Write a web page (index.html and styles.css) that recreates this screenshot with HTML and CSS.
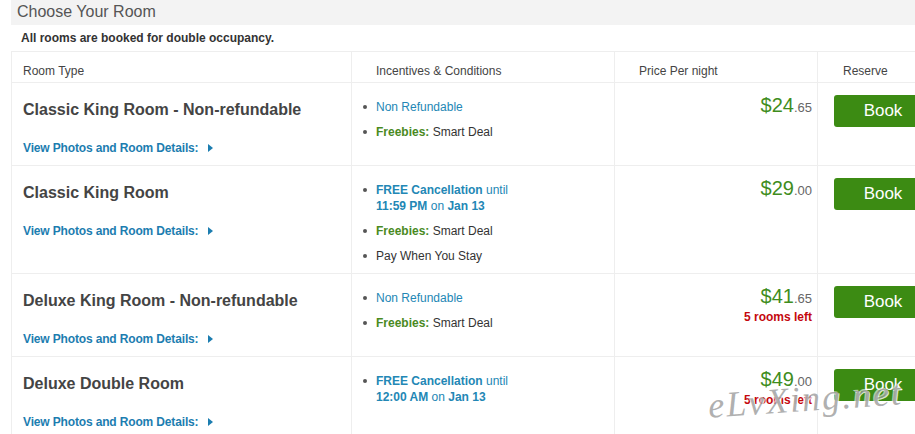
FILE: index.html
```html
<!DOCTYPE html>
<html>
<head>
<meta charset="utf-8">
<link rel="stylesheet" href="styles.css">
</head>
<body>
<div class="page">
  <div class="title-bar">Choose Your Room</div>
  <div class="note">All rooms are booked for double occupancy.</div>
  <div class="table">
    <div class="row head">
      <div class="cell c1">Room Type</div>
      <div class="cell c2">Incentives &amp; Conditions</div>
      <div class="cell c3h">Price Per night</div>
      <div class="cell c4h">Reserve</div>
    </div>

    <div class="row">
      <div class="cell c1">
        <div class="room-name">Classic King Room - Non-refundable</div>
        <a class="details">View Photos and Room Details: <span class="tri"></span></a>
      </div>
      <div class="cell c2">
        <ul class="inc">
          <li class="blue">Non Refundable</li>
          <li><b class="green">Freebies:</b> Smart Deal</li>
        </ul>
      </div>
      <div class="cell c3">
        <div class="price">$24<span class="cents">.65</span></div>
      </div>
      <div class="cell c4"><button class="book">Book</button></div>
    </div>

    <div class="row">
      <div class="cell c1">
        <div class="room-name">Classic King Room</div>
        <a class="details">View Photos and Room Details: <span class="tri"></span></a>
      </div>
      <div class="cell c2">
        <ul class="inc">
          <li class="blue"><b>FREE Cancellation</b> until<br><b>11:59 PM</b> on <b>Jan 13</b></li>
          <li><b class="green">Freebies:</b> Smart Deal</li>
          <li>Pay When You Stay</li>
        </ul>
      </div>
      <div class="cell c3">
        <div class="price">$29<span class="cents">.00</span></div>
      </div>
      <div class="cell c4"><button class="book">Book</button></div>
    </div>

    <div class="row">
      <div class="cell c1">
        <div class="room-name">Deluxe King Room - Non-refundable</div>
        <a class="details">View Photos and Room Details: <span class="tri"></span></a>
      </div>
      <div class="cell c2">
        <ul class="inc">
          <li class="blue">Non Refundable</li>
          <li><b class="green">Freebies:</b> Smart Deal</li>
        </ul>
      </div>
      <div class="cell c3">
        <div class="price">$41<span class="cents">.65</span></div>
        <div class="left">5 rooms left</div>
      </div>
      <div class="cell c4"><button class="book">Book</button></div>
    </div>

    <div class="row">
      <div class="cell c1">
        <div class="room-name">Deluxe Double Room</div>
        <a class="details">View Photos and Room Details: <span class="tri"></span></a>
      </div>
      <div class="cell c2">
        <ul class="inc">
          <li class="blue"><b>FREE Cancellation</b> until<br><b>12:00 AM</b> on <b>Jan 13</b></li>
        </ul>
      </div>
      <div class="cell c3">
        <div class="price">$49<span class="cents">.00</span></div>
        <div class="left">5 rooms left</div>
      </div>
      <div class="cell c4"><button class="book">Book</button></div>
    </div>
  </div>
  <div class="watermark">eLvXing.net</div>
</div>
</body>
</html>
```

FILE: styles.css
```css
html, body {
  margin: 0;
  padding: 0;
}
body {
  width: 915px;
  height: 434px;
  overflow: hidden;
  background: #fff;
  font-family: "Liberation Sans", Arial, sans-serif;
  color: #444;
}
.page {
  position: relative;
  padding-left: 11px;
  height: 434px;
  overflow: hidden;
}
.title-bar {
  background: #f3f3f3;
  height: 25px;
  line-height: 23px;
  padding-left: 6px;
  font-size: 16px;
  color: #555;
}
.note {
  font-size: 12px;
  font-weight: bold;
  color: #333;
  line-height: 14px;
  padding: 6px 0 6px 10px;
}
.table {
  width: 904px;
  overflow: hidden;
  border-top: 1px solid #eee;
  border-left: 1px solid #eee;
}
.row {
  display: grid;
  grid-template-columns: 340px 263px 203px 97px;
  border-bottom: 1px solid #eee;
}
.cell {
  box-sizing: border-box;
  border-right: 1px solid #eee;
}
.cell:last-child {
  border-right: none;
}
.head .cell {
  font-size: 12px;
  line-height: 14px;
  color: #444;
  padding-top: 12px;
  padding-bottom: 4px;
}
.head .c1 { padding-left: 11px; }
.head .c2 { padding-left: 24px; }
.c3h { padding-left: 24px; }
.c4h { padding-left: 25px; }

.c1 {
  padding: 17px 0 9px 11px;
}
.room-name {
  font-size: 16px;
  font-weight: bold;
  line-height: 20px;
  color: #444;
}
.details {
  display: flex;
  align-items: center;
  margin-top: 20px;
  font-size: 12px;
  font-weight: bold;
  line-height: 16px;
  letter-spacing: -0.15px;
  color: #1c7db0;
  white-space: pre;
}
.tri {
  display: inline-block;
  width: 0;
  height: 0;
  margin-left: 6px;
  border-top: 4.5px solid transparent;
  border-bottom: 4.5px solid transparent;
  border-left: 5px solid #1c7db0;
}

.c2 {
  padding: 16px 0 9px 0;
}
.inc {
  list-style: none;
  margin: 0;
  padding: 0 0 0 24px;
}
.inc li {
  position: relative;
  font-size: 12px;
  line-height: 16px;
  color: #333;
  margin-bottom: 9px;
}
.inc li:last-child {
  margin-bottom: 0;
}
.inc li::before {
  content: "";
  position: absolute;
  left: -13px;
  top: 6px;
  width: 4px;
  height: 4px;
  border-radius: 50%;
  background: #555;
}
.inc li.blue {
  color: #2387b5;
}
.green {
  color: #4a8a1f;
}

.c3 {
  padding: 11px 5px 0 0;
  text-align: right;
}
.price {
  font-size: 20px;
  line-height: 22px;
  color: #3f8d1d;
}
.cents {
  font-size: 13px;
  color: #666;
}
.left {
  font-size: 12px;
  font-weight: bold;
  line-height: 14px;
  color: #c4080e;
}

.c4 {
  padding: 12px 0 0 16px;
}
.book {
  display: block;
  width: 98px;
  height: 32px;
  border: none;
  border-radius: 3px;
  background: #3c8b13;
  color: #fff;
  font-family: "Liberation Sans", Arial, sans-serif;
  font-size: 17px;
  padding: 0;
  text-align: center;
}

.watermark {
  position: absolute;
  left: 708px;
  top: 378px;
  font-family: "Liberation Serif", serif;
  font-style: italic;
  font-size: 36px;
  letter-spacing: 2px;
  color: rgba(150, 150, 150, 0.75);
  text-shadow: 1px 1px 0 rgba(255, 255, 255, 0.8), -1px -1px 0 rgba(255, 255, 255, 0.6);
  transform: rotate(-4deg);
  white-space: nowrap;
}
```
